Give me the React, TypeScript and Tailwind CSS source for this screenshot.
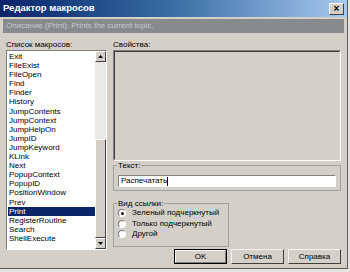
import React from "react";

const items = [
  "Exit","FileExist","FileOpen","Find","Finder","History","JumpContents","JumpContext","JumpHelpOn","JumpID","JumpKeyword","KLink","Next","PopupContext","PopupID","PositionWindow","Prev","Print","RegisterRoutine","Search","ShellExecute",
];

function Radio({ checked, label }: { checked?: boolean; label: string }) {
  return (
    <div className="flex items-center h-[10.5px] whitespace-nowrap">
      <div className="w-[8px] h-[8px] rounded-full bg-white border border-[#808080] border-b-white border-r-white flex items-center justify-center ml-[4px]">
        {checked && <div className="w-[3px] h-[3px] rounded-full bg-black" />}
      </div>
      <span className="ml-[6px]">{label}</span>
    </div>
  );
}

function Btn({ label, def }: { label: string; def?: boolean }) {
  return (
    <div className={`w-[53px] h-[15px] flex items-center justify-center bg-[#d4d0c8] border ${def ? "border-black" : "border-[#f4f3ef] border-r-[#404040] border-b-[#404040]"}`}>
      <div className={`w-full h-full flex items-center justify-center ${def ? "border border-white border-r-[#808080] border-b-[#808080]" : ""}`}>{label}</div>
    </div>
  );
}

export default function App() {
  return (
    <div className="w-[350px] h-[272px] bg-[#e6e4df] text-[8px] text-black" style={{ fontFamily: "'Liberation Sans', Arial, sans-serif" }}>
      <div className="w-[348px] h-[269px] bg-[#d4d0c8] border-r border-b border-r-[#5a5a5a] border-b-[#5a5a5a] flex flex-col">
        <div className="h-[17px] flex items-center justify-between px-[3px] bg-gradient-to-r from-[#0a246a] via-[#3a6ea5] to-[#a6caf0]">
          <span className="text-white font-bold text-[9.5px]">Редактор макросов</span>
          <div className="w-[15px] h-[12px] bg-[#d4d0c8] border border-white border-r-[#404040] border-b-[#404040] flex items-center justify-center text-[10px] font-bold leading-none">×</div>
        </div>
        <div className="mx-[3px] mt-[2px] h-[14px] bg-[#878b8e] flex items-center px-[3px] text-[#c9c9c9]">Описание (Print): Prints the current topic.</div>
        <div className="flex px-[6px] mt-[6px] flex-1">
          <div className="w-[101px] flex flex-col">
            <div className="h-[11px] leading-[11px]">Список макросов:</div>
            <div className="h-[200px] flex border border-[#808080] border-b-white border-r-white bg-white">
              <div className="flex-1 pt-[1px] pl-[1px] leading-[9.1px]">
                {items.map((it) => (
                  <div key={it} className={`h-[9.1px] pl-[1px] ${it === "Print" ? "bg-[#0a246a] text-white" : ""}`}>{it}</div>
                ))}
              </div>
              <div className="w-[11px] flex flex-col bg-[#ebe9e4]">
                <div className="h-[11px] bg-[#d4d0c8] border border-white border-r-[#404040] border-b-[#404040] flex items-center justify-center">
                  <svg width="5" height="3" viewBox="0 0 5 3"><path d="M2.5 0L5 3H0z" fill="#000" /></svg>
                </div>
                <div className="h-[77px]" />
                <div className="flex-1 bg-[#d4d0c8] border border-white border-r-[#404040] border-b-[#404040]" />
                <div className="h-[11px] bg-[#d4d0c8] border border-white border-r-[#404040] border-b-[#404040] flex items-center justify-center">
                  <svg width="5" height="3" viewBox="0 0 5 3"><path d="M0 0H5L2.5 3z" fill="#000" /></svg>
                </div>
              </div>
            </div>
          </div>
          <div className="flex-1 ml-[6px] flex flex-col">
            <div className="h-[11px] leading-[11px]">Свойства:</div>
            <div className="h-[111px] border border-[#808080] border-b-white border-r-white">
              <div className="w-full h-full border border-[#404040] border-b-[#d4d0c8] border-r-[#d4d0c8] bg-[#d4d0c8]" />
            </div>
            <div className="mt-[4px] h-[26px] border border-[#a0a0a0] relative pt-[9px] px-[4px]">
              <span className="absolute -top-[5px] left-[3px] bg-[#d4d0c8] px-[1px] leading-[9px]">Текст:</span>
              <div className="h-[12px] bg-white border border-[#808080] border-b-white border-r-white flex items-center pl-[2px]">Распечатать<span className="w-[1px] h-[9px] bg-black" /></div>
            </div>
            <div className="mt-[12px] h-[44px] w-[116px] border border-[#a0a0a0] relative pt-[4px]">
              <span className="absolute -top-[5px] left-[3px] bg-[#d4d0c8] px-[1px] leading-[9px]">Вид ссылки:</span>
              <Radio checked label="Зеленый подчеркнутый" />
              <Radio label="Только подчеркнутый" />
              <Radio label="Другой" />
            </div>
            <div className="flex justify-end gap-[4px] mt-[2px] mr-[0px]">
              <Btn label="OK" def />
              <Btn label="Отмена" />
              <Btn label="Справка" />
            </div>
          </div>
        </div>
      </div>
    </div>
  );
}
